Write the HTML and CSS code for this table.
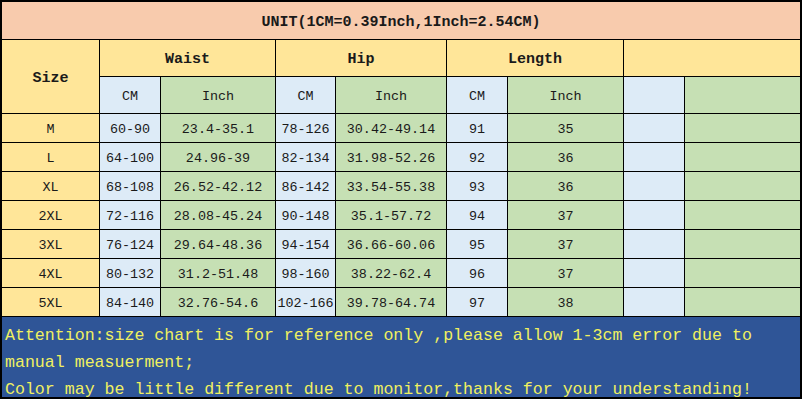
FILE: index.html
```html
<!DOCTYPE html>
<html>
<head>
<meta charset="utf-8">
<link rel="stylesheet" href="styles.css">
</head>
<body>
<div class="chart">
  <div class="cell title span-all bold">UNIT(1CM=0.39Inch,1Inch=2.54CM)</div>

  <div class="cell yellow size-head bold">Size</div>
  <div class="cell yellow span2 bold">Waist</div>
  <div class="cell yellow span2 bold">Hip</div>
  <div class="cell yellow span2 bold">Length</div>
  <div class="cell yellow span2"></div>

  <div class="cell blue">CM</div><div class="cell green">Inch</div>
  <div class="cell blue">CM</div><div class="cell green">Inch</div>
  <div class="cell blue">CM</div><div class="cell green">Inch</div>
  <div class="cell blue"></div><div class="cell green"></div>

  <div class="cell yellow">M</div><div class="cell blue">60-90</div><div class="cell green">23.4-35.1</div><div class="cell blue">78-126</div><div class="cell green">30.42-49.14</div><div class="cell blue">91</div><div class="cell green">35</div><div class="cell blue"></div><div class="cell green"></div>
  <div class="cell yellow">L</div><div class="cell blue">64-100</div><div class="cell green">24.96-39</div><div class="cell blue">82-134</div><div class="cell green">31.98-52.26</div><div class="cell blue">92</div><div class="cell green">36</div><div class="cell blue"></div><div class="cell green"></div>
  <div class="cell yellow">XL</div><div class="cell blue">68-108</div><div class="cell green">26.52-42.12</div><div class="cell blue">86-142</div><div class="cell green">33.54-55.38</div><div class="cell blue">93</div><div class="cell green">36</div><div class="cell blue"></div><div class="cell green"></div>
  <div class="cell yellow">2XL</div><div class="cell blue">72-116</div><div class="cell green">28.08-45.24</div><div class="cell blue">90-148</div><div class="cell green">35.1-57.72</div><div class="cell blue">94</div><div class="cell green">37</div><div class="cell blue"></div><div class="cell green"></div>
  <div class="cell yellow">3XL</div><div class="cell blue">76-124</div><div class="cell green">29.64-48.36</div><div class="cell blue">94-154</div><div class="cell green">36.66-60.06</div><div class="cell blue">95</div><div class="cell green">37</div><div class="cell blue"></div><div class="cell green"></div>
  <div class="cell yellow">4XL</div><div class="cell blue">80-132</div><div class="cell green">31.2-51.48</div><div class="cell blue">98-160</div><div class="cell green">38.22-62.4</div><div class="cell blue">96</div><div class="cell green">37</div><div class="cell blue"></div><div class="cell green"></div>
  <div class="cell yellow">5XL</div><div class="cell blue">84-140</div><div class="cell green">32.76-54.6</div><div class="cell blue">102-166</div><div class="cell green">39.78-64.74</div><div class="cell blue">97</div><div class="cell green">38</div><div class="cell blue"></div><div class="cell green"></div>

  <div class="note span-all">Attention:size chart is for reference only ,please allow 1-3cm error due to<br>manual measuerment;<br>Color may be little different due to monitor,thanks for your understanding!</div>
</div>
</body>
</html>
```

FILE: styles.css
```css
html, body {
  margin: 0;
  padding: 0;
  background: #ffffff;
}

.chart {
  width: 802px;
  height: 399px;
  box-sizing: border-box;
  background: #000;
  padding: 2px;
  display: grid;
  grid-template-columns: 97px 60px 114px 59px 110px 60px 115px 60px 115px;
  grid-template-rows: 37px 36px 36px repeat(7, 28px) 80px;
  gap: 1px;
  font-family: "Liberation Mono", "DejaVu Sans Mono", monospace;
  color: #1a1a1a;
}

.cell {
  display: flex;
  align-items: center;
  justify-content: center;
  font-size: 13.4px;
  padding-top: 3px;
  box-sizing: border-box;
  white-space: nowrap;
}

.bold {
  font-weight: bold;
  font-size: 15px;
}

.span-all { grid-column: 1 / -1; }
.span2 { grid-column: span 2; }
.size-head { grid-row: span 2; }

.title { background: #f8cbad; }
.yellow { background: #ffe699; }
.blue { background: #ddebf7; }
.green { background: #c6e0b4; }

.note {
  background: #2f5597;
  color: #f0f060;
  font-size: 16.6px;
  line-height: 27px;
  padding: 5px 0 0 3px;
  overflow: hidden;
  white-space: nowrap;
}
```
